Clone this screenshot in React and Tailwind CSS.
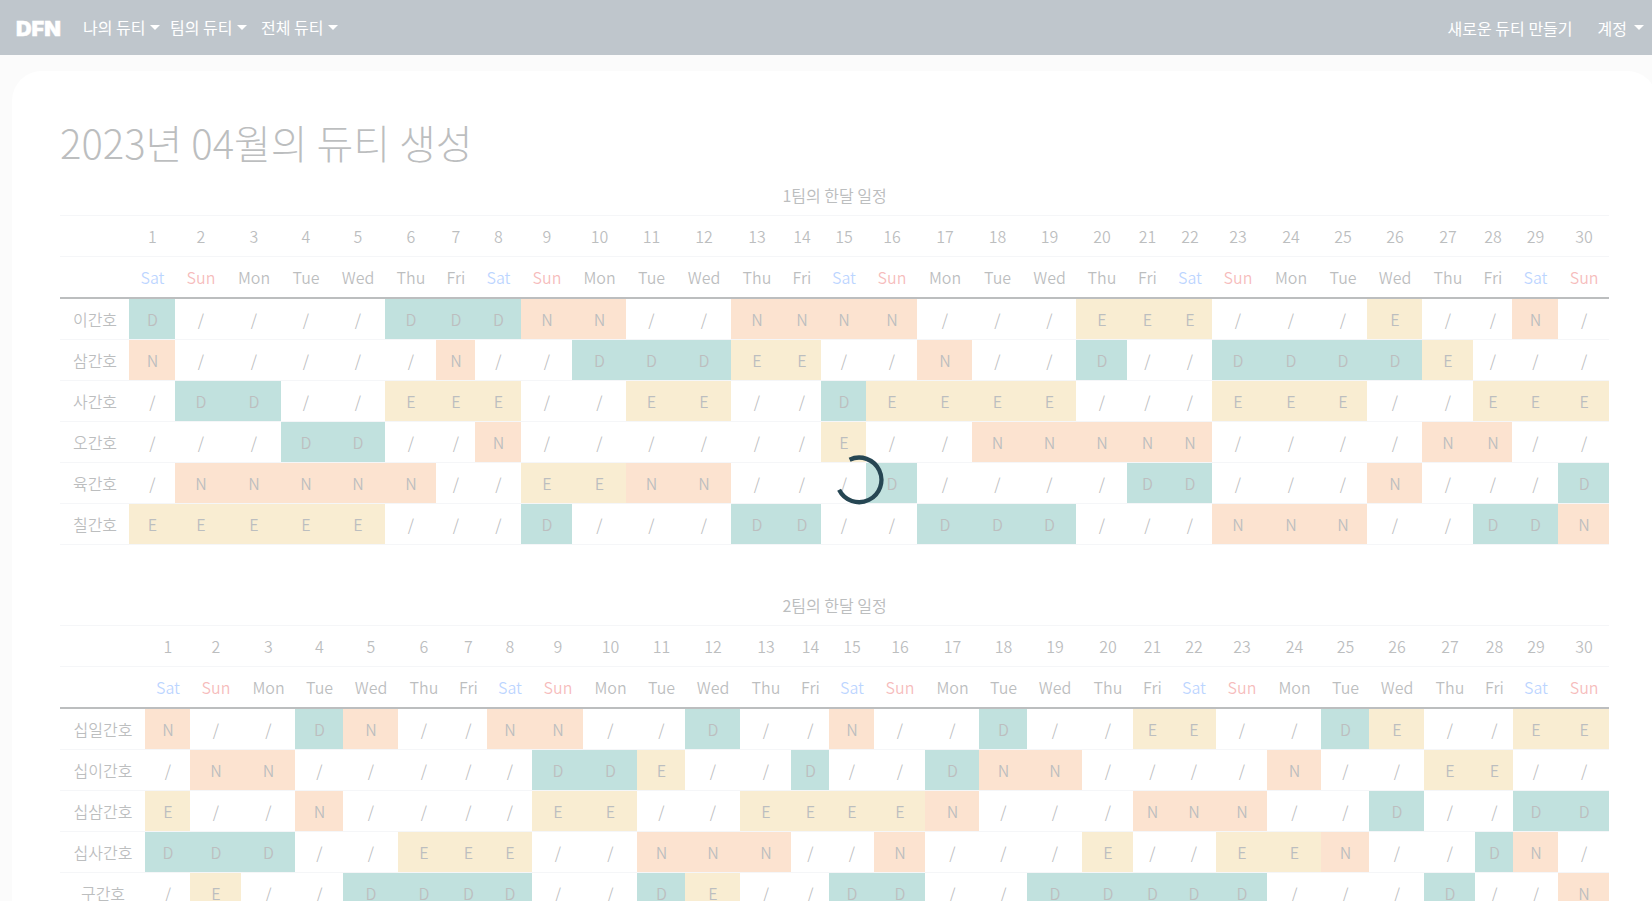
const NAMES = ["Sat", "Sun", "Mon", "Tue", "Wed", "Thu", "Fri"];
const DAYS = Array.from({ length: 30 }, (_, i) => ({ date: i + 1, name: NAMES[i % 7] }));

const TEAMS = [
  {
    title: "1팀의 한달 일정",
    widths: [69, 46, 51, 55, 49, 55, 51, 39, 46, 51, 54, 50, 55, 51, 39, 45, 51, 55, 50, 54, 51, 40, 45, 51, 55, 49, 55, 51, 39, 46, 51],
    rows: [
      ["이간호", "D////DDDNN//NNNN///EEE///E//N/"],
      ["삼간호", "N/////N//DDDEE//N//D//DDDDE///"],
      ["사간호", "/DD//EEE//EE//DEEEE///EEE//EEE"],
      ["오간호", "///DD//N//////E//NNNNN////NN//"],
      ["육간호", "/NNNNN//EENN///D////DD///N///D"],
      ["칠간호", "EEEEE///D///DD//DDD///NNN//DDN"],
    ],
  },
  {
    title: "2팀의 한달 일정",
    widths: [85, 45, 51, 54, 48, 55, 51, 38, 45, 51, 54, 48, 55, 51, 38, 45, 51, 54, 48, 55, 51, 38, 45, 51, 54, 48, 55, 51, 38, 45, 51],
    rows: [
      ["십일간호", "N//DN//NN//D//N//D//EE//DE//EE"],
      ["십이간호", "/NN/////DDE//D//DNN////N//EE//"],
      ["십삼간호", "E//N////EE//EEEEN///NNN//D//DD"],
      ["십사간호", "DDD//EEE//NNN//N///E//EEN//DN/"],
      ["구간호", "/E//DDDD//DE//DD//DDDDD///D//N"],
    ],
  },
];

const FILL = { D: "bg-[#2f9a8f]", E: "bg-[#e9c46a]", N: "bg-[#f4a261]", "/": "" };
const DAY_COLOR = { Sat: "text-[#1f75fe]", Sun: "text-[#e02020]" };

function Schedule({ team }) {
  return (
    <table className="mb-10 w-[1549px] table-fixed border-separate border-spacing-0 text-center text-base font-[350]">
      <colgroup>
        {team.widths.map((w, i) => (
          <col key={i} style={{ width: w }} />
        ))}
      </colgroup>
      <thead>
        <tr>
          <th colSpan={31} className="h-[41px] border-b border-[#dee2e6] p-0 font-normal">{team.title}</th>
        </tr>
        <tr>
          <th className="h-[41px] border-b border-[#dee2e6] p-0" />
          {DAYS.map((d) => (
            <th key={d.date} className="h-[41px] border-b border-[#dee2e6] p-0 pl-px font-[350]">{d.date}</th>
          ))}
        </tr>
        <tr>
          <th className="h-[42px] border-b-2 border-[#212529] p-0" />
          {DAYS.map((d) => (
            <th key={d.date} className="h-[42px] border-b-2 border-[#212529] p-0 pl-px font-[350]">
              <span className={DAY_COLOR[d.name]}>{d.name}</span>
            </th>
          ))}
        </tr>
      </thead>
      <tbody>
        {team.rows.map(([name, duties]) => (
          <tr key={name}>
            <td className="h-[41px] border-b border-[#dee2e6] p-0 pl-px">{name}</td>
            {[...duties].map((c, i) => (
              <td key={i} className={`h-[41px] border-b border-[#dee2e6] p-0 pl-px ${FILL[c]}`}>{c}</td>
            ))}
          </tr>
        ))}
      </tbody>
    </table>
  );
}

function Caret({ className }) {
  return <span className={`inline-block border-x-[5px] border-t-[5px] border-x-transparent border-t-white ${className}`} />;
}

export default function App() {
  return (
    <div className="relative h-[901px] w-[1652px] overflow-hidden bg-[#f2f2f2] font-['Noto_Sans_CJK_KR',sans-serif] leading-6 text-[#212529]">
      <nav className="flex h-[55px] items-center bg-[#2a4155] text-base text-white">
        <span className="ml-4 w-[67px] pt-0.5">
          <span className="inline-block origin-left scale-x-[1.08] font-['Inter',sans-serif] text-[20px] font-black [-webkit-text-stroke:0.4px_white]">DFN</span>
        </span>
        <div className="flex pb-px">
          <span className="flex w-[87px] items-center">나의 듀티<Caret className="ml-[5px] mt-px" /></span>
          <span className="flex w-[91px] items-center">팀의 듀티<Caret className="ml-[5px] mt-px" /></span>
          <span className="flex items-center">전체 듀티<Caret className="ml-[5px] mt-px" /></span>
        </div>
        <span className="ml-auto mr-[25px]">새로운 듀티 만들기</span>
        <span className="mr-[8px] flex items-center">계정<Caret className="ml-[7px]" /></span>
      </nav>
      <main className="ml-3 mt-4 h-[1100px] w-[1645px] rounded-[30px] bg-white pl-12 pt-12">
        <h1 className="h-[56px] text-[40px] font-light leading-[47px]">2023년 04월의 듀티 생성</h1>
        {TEAMS.map((team) => (
          <Schedule key={team.title} team={team} />
        ))}
      </main>
      <div className="absolute inset-0 bg-white/70" />
      <svg className="absolute left-[834px] top-[455px]" width="50" height="50" viewBox="0 0 50 50" fill="none">
        <path d="M15.6 4.7 A22.3 22.3 0 1 1 5.1 34.7" stroke="#264653" strokeWidth="4.3" />
      </svg>
    </div>
  );
}
